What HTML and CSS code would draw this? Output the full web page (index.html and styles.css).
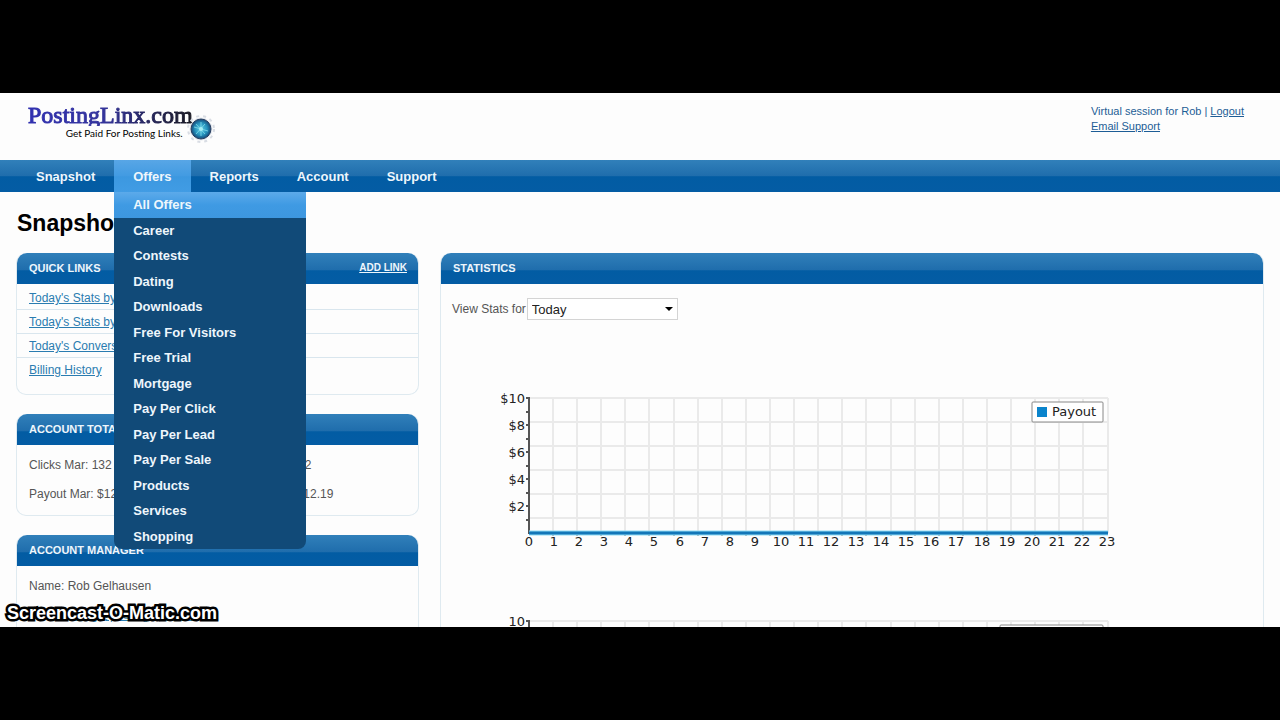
FILE: index.html
```html
<!DOCTYPE html>
<html lang="en">
<head>
<meta charset="utf-8">
<title>Snapshot - PostingLinx.com</title>
<link rel="stylesheet" href="styles.css">
</head>
<body>
<div class="screen">
  <header class="top">
    <div class="logo">
      <div class="logo-text">
        <span class="logo-name">PostingLinx.com</span>
        <span class="logo-tag">Get Paid For Posting Links.</span>
      </div>
      <svg class="logo-globe" viewBox="0 0 30 30" aria-hidden="true">
        <defs>
          <radialGradient id="globe"><stop offset="0" stop-color="#5cc8e0"/><stop offset=".6" stop-color="#2694be"/><stop offset="1" stop-color="#164878"/></radialGradient>
        </defs>
        <circle cx="15" cy="15" r="13" fill="none" stroke="#d9dde4" stroke-width="2" stroke-dasharray="3 4"/>
        <circle cx="15" cy="15" r="11" fill="none" stroke="#e4e8ee"/>
        <circle cx="15" cy="15" r="10" fill="url(#globe)" stroke="#2a3f60"/>
        <path d="M15 8v14M8 13l14 4M10 20l9-10M10 10l9 10" stroke="#8fe4f0" stroke-width="1" fill="none" opacity=".7"/>
        <circle cx="15" cy="15" r="2" fill="#a5eef5"/>
      </svg>
    </div>
    <div class="session">
      <div>Virtual session for Rob | <a href="#">Logout</a></div>
      <div><a href="#">Email Support</a></div>
    </div>
  </header>

  <nav class="nav">
    <ul class="nav-list">
      <li><a href="#">Snapshot</a></li>
      <li class="open"><a href="#">Offers</a>
        <ul class="menu">
          <li class="current"><a href="#">All Offers</a></li>
          <li><a href="#">Career</a></li>
          <li><a href="#">Contests</a></li>
          <li><a href="#">Dating</a></li>
          <li><a href="#">Downloads</a></li>
          <li><a href="#">Free For Visitors</a></li>
          <li><a href="#">Free Trial</a></li>
          <li><a href="#">Mortgage</a></li>
          <li><a href="#">Pay Per Click</a></li>
          <li><a href="#">Pay Per Lead</a></li>
          <li><a href="#">Pay Per Sale</a></li>
          <li><a href="#">Products</a></li>
          <li><a href="#">Services</a></li>
          <li><a href="#">Shopping</a></li>
        </ul>
      </li>
      <li><a href="#">Reports</a></li>
      <li><a href="#">Account</a></li>
      <li><a href="#">Support</a></li>
    </ul>
  </nav>

  <main class="content">
    <h1>Snapshot</h1>
    <div class="columns">
      <div class="side">
        <section class="panel">
          <div class="panel-head"><h2>Quick Links</h2><a href="#">Add Link</a></div>
          <ul class="links">
            <li><a href="#">Today's Stats by Offer</a></li>
            <li><a href="#">Today's Stats by Sub ID</a></li>
            <li><a href="#">Today's Conversions</a></li>
            <li><a href="#">Billing History</a></li>
          </ul>
        </section>
        <section class="panel">
          <div class="panel-head"><h2>Account Totals</h2></div>
          <div class="facts totals">
            <span>Clicks Mar: 132</span><span>Clicks YTD: 132</span>
            <span>Payout Mar: $12.19</span><span>Payout YTD: $12.19</span>
          </div>
        </section>
        <section class="panel">
          <div class="panel-head"><h2>Account Manager</h2></div>
          <div class="facts">
            <span>Name: Rob Gelhausen</span>
            <span class="email">Email: <a href="#">rob.g@postinglinx.com</a></span>
          </div>
        </section>
      </div>

      <section class="panel stats">
        <div class="panel-head"><h2>Statistics</h2></div>
        <div class="stats-body">
          <div class="filter">
            <label for="range">View Stats for</label>
            <span class="select"><select id="range"><option>Today</option></select></span>
          </div>
          <svg class="chart" viewBox="0 0 680 170" role="img" aria-label="Payout by hour">
            <path class="grid" d="M101 18V153M125 18V153M149 18V153M173 18V153M197 18V153M222 18V153M246 18V153M270 18V153M294 18V153M318 18V153M342 18V153M366 18V153M390 18V153M414 18V153M439 18V153M463 18V153M487 18V153M511 18V153M535 18V153M559 18V153M583 18V153M607 18V153M631 18V153M656 18V153M77 18H656M77 42H656M77 66H656M77 90H656M77 114H656M77 138H656"/>
            <path class="axis" d="M77 17V154M74 18H77M74 32H77M74 45H77M74 59H77M74 72H77M74 86H77M74 99H77M74 113H77M74 126H77M74 140H77"/>
            <path class="axis tick" d="M101 153V156M125 153V156M149 153V156M173 153V156M197 153V156M222 153V156M246 153V156M270 153V156M294 153V156M318 153V156M342 153V156M366 153V156M390 153V156M414 153V156M439 153V156M463 153V156M487 153V156M511 153V156M535 153V156M559 153V156M583 153V156M607 153V156M631 153V156"/>
            <path class="series-glow" d="M77 153H656"/>
            <path class="series" d="M77 153H656"/>
            <g class="ylab">
              <text x="73" y="23">$10</text><text x="73" y="50">$8</text><text x="73" y="77">$6</text><text x="73" y="104">$4</text><text x="73" y="131">$2</text>
            </g>
            <g class="xlab">
              <text x="77" y="166">0</text><text x="102" y="166">1</text><text x="127" y="166">2</text><text x="152" y="166">3</text><text x="177" y="166">4</text><text x="202" y="166">5</text><text x="228" y="166">6</text><text x="253" y="166">7</text><text x="278" y="166">8</text><text x="303" y="166">9</text><text x="329" y="166">10</text><text x="354" y="166">11</text><text x="379" y="166">12</text><text x="404" y="166">13</text><text x="429" y="166">14</text><text x="454" y="166">15</text><text x="479" y="166">16</text><text x="504" y="166">17</text><text x="530" y="166">18</text><text x="555" y="166">19</text><text x="580" y="166">20</text><text x="605" y="166">21</text><text x="630" y="166">22</text><text x="655" y="166">23</text>
            </g>
            <rect class="legend" x="580" y="22" width="71" height="20" rx="1"/>
            <rect class="key" x="585" y="27" width="10" height="10"/>
            <text x="600" y="36">Payout</text>
          </svg>
          <svg class="chart" viewBox="0 0 680 170" role="img" aria-label="Conversions by hour">
            <path class="grid" d="M101 18V153M125 18V153M149 18V153M173 18V153M197 18V153M222 18V153M246 18V153M270 18V153M294 18V153M318 18V153M342 18V153M366 18V153M390 18V153M414 18V153M439 18V153M463 18V153M487 18V153M511 18V153M535 18V153M559 18V153M583 18V153M607 18V153M631 18V153M656 18V153M77 18H656M77 42H656"/>
            <path class="axis" d="M77 17V154M74 18H77M74 32H77"/>
            <g class="ylab"><text x="73" y="23">10</text></g>
            <rect class="legend" x="548" y="22" width="103" height="20" rx="1"/>
          </svg>
        </div>
      </section>
    </div>
  </main>
  <div class="watermark">Screencast-O-Matic.com</div>
</div>
</body>
</html>
```

FILE: styles.css
```css
* { box-sizing: border-box; }

body {
  margin: 0;
  height: 100vh;
  padding: 93px 0;
  background: #000;
  font: 12px/16px "Liberation Sans", Arial, sans-serif;
  color: #555;
}

ul { list-style: none; margin: 0; padding: 0; }
h1, h2 { margin: 0; }

.screen {
  position: relative;
  height: 100%;
  overflow: hidden;
  background: #fdfdfd;
}

.top {
  display: flex;
  justify-content: space-between;
  height: 67px;
  padding: 11px 36px 0 28px;
}

.logo { display: flex; align-items: flex-end; height: 40px; }
.logo-text { display: flex; flex-direction: column; align-items: flex-end; height: 40px; }
.logo-name {
  font: 24px/22px "Liberation Serif", serif;
  background: linear-gradient(90deg, #3030b0 0%, #34349c 45%, #181820 100%);
  background-clip: text;
  -webkit-background-clip: text;
  color: transparent;
  -webkit-text-stroke: 1px transparent;
}
.logo-tag {
  font: 10px/14px Lato, sans-serif;
  color: #000;
  padding-right: 10px;
}
.logo-globe { width: 30px; height: 30px; margin-left: -7px; }

.session { font-size: 11px; line-height: 15px; color: #1d5d96; }
.session a { color: inherit; }

.nav {
  height: 32px;
  padding-left: 17px;
  background: linear-gradient(#3180ba 0, #1f6dac 50%, #025ca3 52%, #045ca4 100%);
}
.nav-list { display: flex; height: 100%; }
.nav-list > li { position: relative; }
.nav a {
  display: block;
  padding: 0 19px;
  color: #eef6fc;
  font-size: 13px;
  font-weight: bold;
  line-height: 34px;
  text-decoration: none;
}
.open { background: linear-gradient(#58a6e6 0, #429be2 50%, #3c98e0 52%, #419ce4 100%); }

.menu {
  position: absolute;
  z-index: 2;
  top: 100%;
  left: 0;
  display: grid;
  grid-auto-rows: 1fr;
  width: 192px;
  height: 357px;
  border-radius: 0 0 8px 8px;
  background: #114a78;
}
.menu a { height: 25px; line-height: 26px; }
.current { background: linear-gradient(#5caaea, #3f9ae3 50%, #3d97e0); }

.content { padding: 18px 16px; }
h1 { padding-left: 1px; font-size: 23px; line-height: 26px; color: #000; }

.columns {
  display: grid;
  grid-template-columns: 403px 1fr;
  align-items: start;
  gap: 21px;
  margin-top: 17px;
}
.side { display: grid; gap: 19px; }

.panel {
  border: 1px solid #dfeaf0;
  border-top: 0;
  border-radius: 10px;
  background: #fdfdfd;
}
.panel-head {
  display: flex;
  align-items: center;
  justify-content: space-between;
  height: 31px;
  padding: 0 11px 2px 12px;
  border-radius: 10px 10px 0 0;
  background: linear-gradient(#3180ba 0, #1f6dac 55%, #025ca3 57%, #045ca4 100%);
  color: #eef6fc;
  text-transform: uppercase;
}
.panel-head h2 { font-size: 11px; line-height: 16px; }
.panel-head a { color: inherit; font-size: 10px; font-weight: bold; }

.links { padding: 2px 0 12px; }
.links li { height: 24px; padding: 4px 12px; border-bottom: 1px solid #d9e6ee; }
.links li:last-child { border-bottom: 0; }
.links a, .facts a { color: #2a7cb0; }

.facts { display: grid; padding: 6px 12px; line-height: 29px; }
.totals { grid-template-columns: 1fr 1fr; column-gap: 16px; }
.email { display: flex; gap: 8px; }

.stats-body { padding: 14px 11px; }
.filter { display: flex; align-items: center; gap: 1px; margin-bottom: 60px; }
.select { position: relative; display: flex; width: 151px; }
.select select {
  appearance: none;
  width: 100%;
  height: 22px;
  padding: 0 4px;
  border: 1px solid #d4d4d4;
  border-radius: 0;
  background: #fff;
  font: 13px "Liberation Sans", Arial, sans-serif;
  color: #222;
}
.select::after {
  content: "";
  position: absolute;
  right: 5px;
  top: 9px;
  border: 4px solid transparent;
  border-top-color: #000;
  border-bottom: 0;
}

.chart {
  display: block;
  width: 680px;
  max-width: 100%;
  margin-bottom: 53px;
  font: 13px "DejaVu Sans", Verdana, sans-serif;
  fill: #222;
}
.grid { fill: none; stroke: #eaeaea; stroke-width: 2; }
.axis { fill: none; stroke: #555; stroke-width: 2; }
.tick { stroke-width: 1; }
.series-glow { stroke: #8fdcf6; stroke-width: 5; }
.series { stroke: #1376b8; stroke-width: 3; }
.ylab { text-anchor: end; }
.xlab { text-anchor: middle; }
.legend { fill: #fff; stroke: #888; }
.key { fill: #0a84cc; }

.watermark {
  position: absolute;
  z-index: 3;
  left: 7px;
  bottom: 4px;
  font-size: 18px;
  font-weight: bold;
  line-height: 20px;
  color: #fff;
  -webkit-text-stroke: 5px #000;
  paint-order: stroke fill;
}
```
